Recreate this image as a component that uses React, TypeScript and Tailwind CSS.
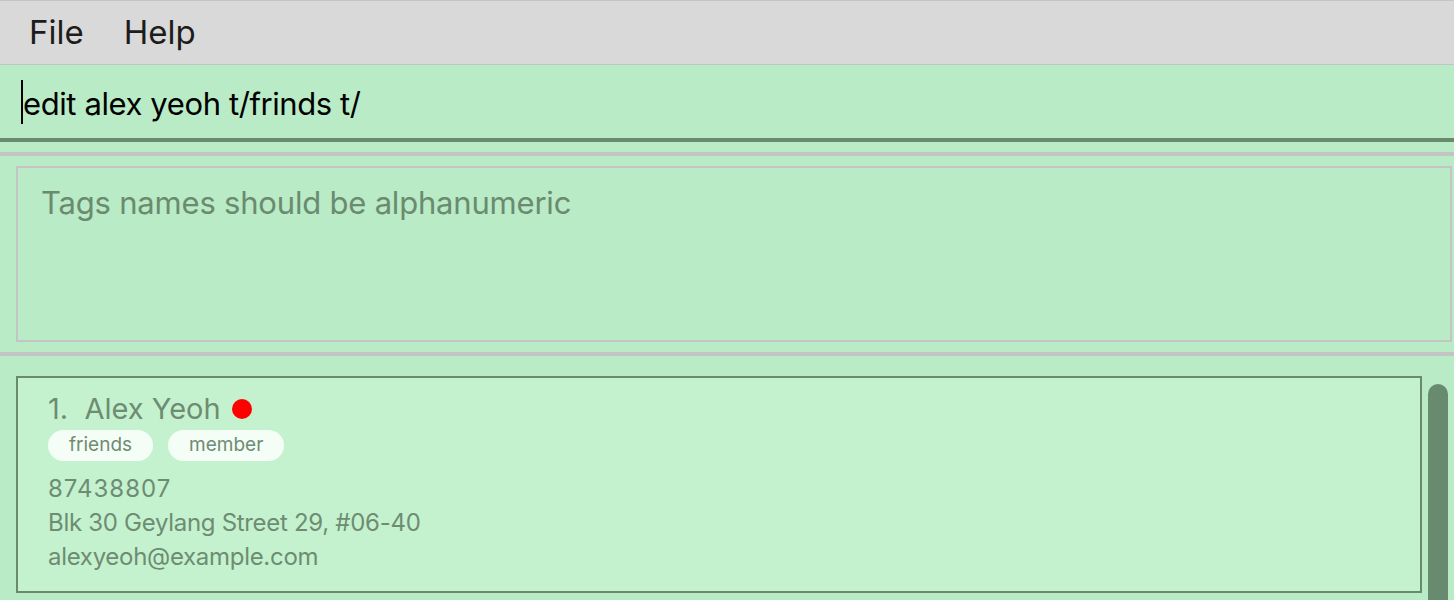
export default function App() {
  return (
    <div className="h-[600px] w-full overflow-hidden bg-[#b8ebc6] font-['Inter',sans-serif]">
      {/* Menu bar */}
      <div className="flex h-[65px] items-center gap-[40px] border-y border-[#c4c4c4] bg-[#d9d9d9] pl-[29px] text-[33px] text-[#1c1c1c]">
        <span>File</span>
        <span>Help</span>
      </div>

      {/* Command box */}
      <div className="flex h-[77px] items-center border-b-4 border-[#6a8a6f] pl-[21px]">
        <span className="h-[44px] w-[2px] bg-black" />
        <span className="mt-[4px] text-[31px] leading-none tracking-[-0.4px] text-black">edit alex yeoh t/frinds t/</span>
      </div>

      {/* Result display */}
      <div className="mt-[10px] border-t-4 border-[#c4c4c4] pb-[10px] pt-[10px]">
        <div className="ml-[16px] mr-[2px] h-[176px] border-2 border-[#c4c4c4] pl-[23px] pt-[12px]">
          <p className="text-[31px] tracking-[-0.2px] text-[#6b8a6f]">Tags names should be alphanumeric</p>
        </div>
      </div>

      {/* Person list */}
      <div className="flex gap-[6px] border-t-4 border-[#c4c4c4] pl-[16px] pt-[20px]">
        <div className="h-[217px] w-[1406px] border-2 border-[#6a8a6f] bg-[#c4f2cf] pl-[30px] pt-[14px] text-[#6e8c72]">
          <div className="flex items-center">
            <span className="text-[29px] leading-[34px]">1.&nbsp;&nbsp;Alex Yeoh</span>
            <span className="ml-[11px] h-[20px] w-[20px] rounded-full bg-[#ff0000]" />
          </div>
          <div className="mt-[4px] flex gap-[15px]">
            <span className="flex h-[31px] items-center rounded-full bg-[#f4fdf6] px-[21px] text-[19px]">friends</span>
            <span className="flex h-[31px] items-center rounded-full bg-[#f4fdf6] px-[21px] text-[19px]">member</span>
          </div>
          <div className="mt-[11px] flex flex-col text-[24px] leading-[34px] tracking-[-0.3px]">
            <span className="tracking-[1px]">87438807</span>
            <span>Blk 30 Geylang Street 29, #06-40</span>
            <span>alexyeoh@example.com</span>
          </div>
        </div>
        <div className="mt-[8px] h-[300px] w-[20px] rounded-t-[10px] bg-[#688a6f]" />
      </div>
    </div>
  );
}
